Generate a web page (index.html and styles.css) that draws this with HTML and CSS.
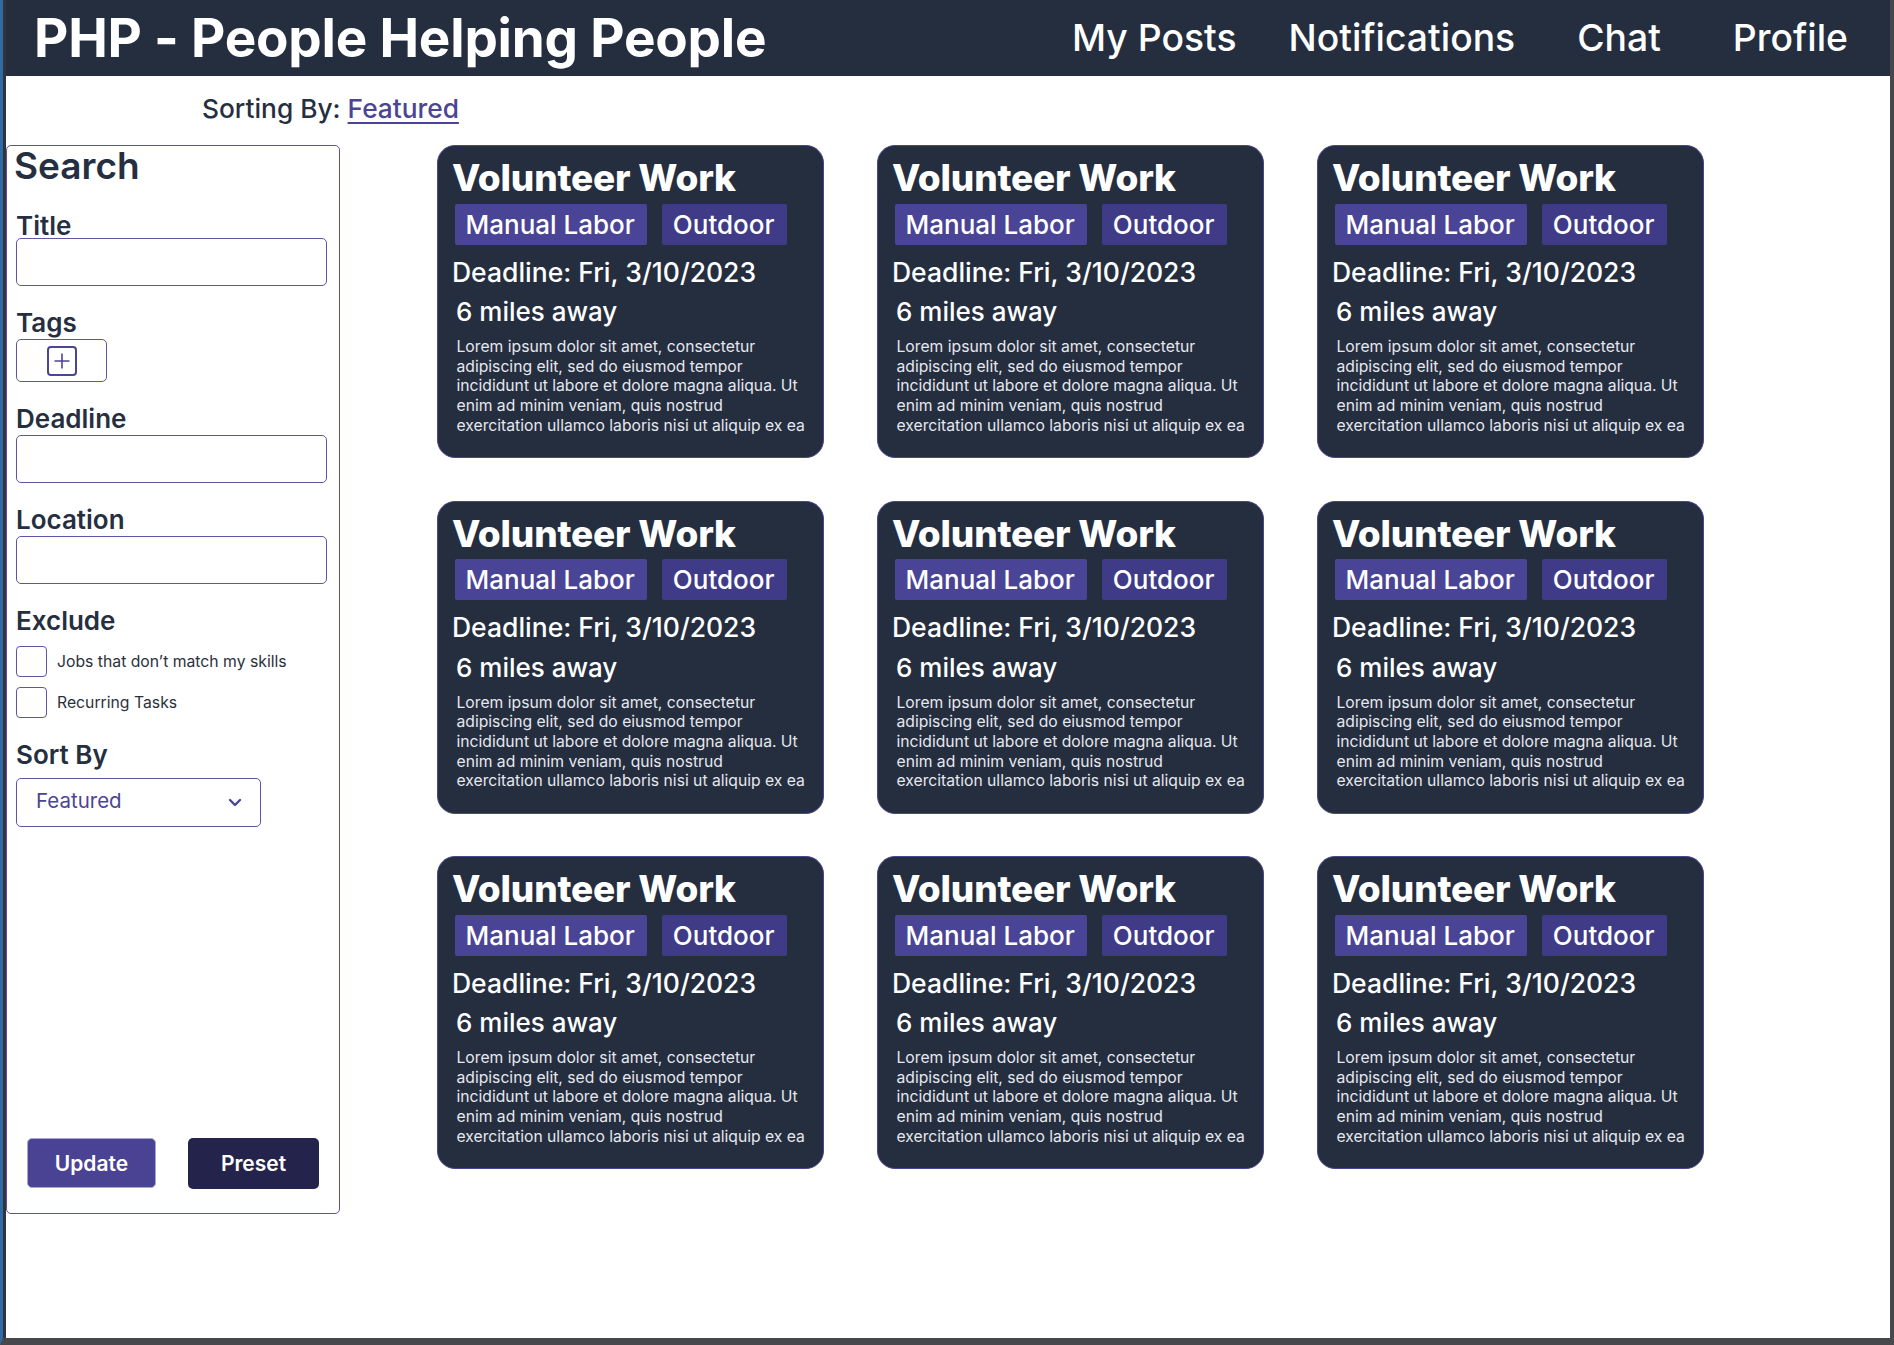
FILE: index.html
```html
<!DOCTYPE html>
<html lang="en">
<head>
<meta charset="utf-8">
<title>PHP - People Helping People</title>
<link rel="stylesheet" href="styles.css">
</head>
<body>
<div class="frame">
  <div class="page">
    <header class="topbar">
      <h1 class="brand">PHP - People Helping People</h1>
      <nav class="nav">
        <a class="nav-link">My Posts</a>
        <a class="nav-link">Notifications</a>
        <a class="nav-link nav-link--chat">Chat</a>
        <a class="nav-link nav-link--profile">Profile</a>
      </nav>
    </header>

    <div class="sortline">Sorting By: <a class="sortline-value">Featured</a></div>

    <div class="content">
      <aside class="search">
        <h2 class="search-title">Search</h2>

        <div class="field-label field-label--first">Title</div>
        <div class="text-input"></div>

        <div class="field-label">Tags</div>
        <div class="tag-picker">
          <span class="tag-add">
            <svg width="30" height="30" viewBox="0 0 30 30" aria-hidden="true">
              <rect x="1" y="1" width="28" height="28" rx="3" fill="none" stroke="#4b4593" stroke-width="2"/>
              <path d="M15 7.5v15M7.5 15h15" stroke="#4b4593" stroke-width="1.6" fill="none"/>
            </svg>
          </span>
        </div>

        <div class="field-label">Deadline</div>
        <div class="text-input"></div>

        <div class="field-label">Location</div>
        <div class="text-input"></div>

        <div class="field-label">Exclude</div>
        <div class="check-row check-row--first">
          <span class="checkbox"></span>
          <span class="check-text">Jobs that don’t match my skills</span>
        </div>
        <div class="check-row">
          <span class="checkbox"></span>
          <span class="check-text">Recurring Tasks</span>
        </div>

        <div class="field-label">Sort By</div>
        <div class="select">
          <span>Featured</span>
          <svg width="14" height="9" viewBox="0 0 14 9" aria-hidden="true">
            <path d="M2 2l5 5 5-5" fill="none" stroke="#4b4593" stroke-width="2.4" stroke-linecap="round" stroke-linejoin="round"/>
          </svg>
        </div>

        <div class="actions">
          <button class="btn btn--update">Update</button>
          <button class="btn btn--preset">Preset</button>
        </div>
      </aside>

      <main class="grid">
        <article class="card">
          <h3 class="card-title">Volunteer Work</h3>
          <div class="card-tags"><span class="tag">Manual Labor</span><span class="tag tag--alt">Outdoor</span></div>
          <div class="card-deadline">Deadline: Fri, 3/10/2023</div>
          <div class="card-distance">6 miles away</div>
          <p class="card-desc">Lorem ipsum dolor sit amet, consectetur<br>adipiscing elit, sed do eiusmod tempor<br>incididunt ut labore et dolore magna aliqua. Ut<br>enim ad minim veniam, quis nostrud<br>exercitation ullamco laboris nisi ut aliquip ex ea</p>
        </article>
        <article class="card">
          <h3 class="card-title">Volunteer Work</h3>
          <div class="card-tags"><span class="tag">Manual Labor</span><span class="tag tag--alt">Outdoor</span></div>
          <div class="card-deadline">Deadline: Fri, 3/10/2023</div>
          <div class="card-distance">6 miles away</div>
          <p class="card-desc">Lorem ipsum dolor sit amet, consectetur<br>adipiscing elit, sed do eiusmod tempor<br>incididunt ut labore et dolore magna aliqua. Ut<br>enim ad minim veniam, quis nostrud<br>exercitation ullamco laboris nisi ut aliquip ex ea</p>
        </article>
        <article class="card">
          <h3 class="card-title">Volunteer Work</h3>
          <div class="card-tags"><span class="tag">Manual Labor</span><span class="tag tag--alt">Outdoor</span></div>
          <div class="card-deadline">Deadline: Fri, 3/10/2023</div>
          <div class="card-distance">6 miles away</div>
          <p class="card-desc">Lorem ipsum dolor sit amet, consectetur<br>adipiscing elit, sed do eiusmod tempor<br>incididunt ut labore et dolore magna aliqua. Ut<br>enim ad minim veniam, quis nostrud<br>exercitation ullamco laboris nisi ut aliquip ex ea</p>
        </article>
        <article class="card">
          <h3 class="card-title">Volunteer Work</h3>
          <div class="card-tags"><span class="tag">Manual Labor</span><span class="tag tag--alt">Outdoor</span></div>
          <div class="card-deadline">Deadline: Fri, 3/10/2023</div>
          <div class="card-distance">6 miles away</div>
          <p class="card-desc">Lorem ipsum dolor sit amet, consectetur<br>adipiscing elit, sed do eiusmod tempor<br>incididunt ut labore et dolore magna aliqua. Ut<br>enim ad minim veniam, quis nostrud<br>exercitation ullamco laboris nisi ut aliquip ex ea</p>
        </article>
        <article class="card">
          <h3 class="card-title">Volunteer Work</h3>
          <div class="card-tags"><span class="tag">Manual Labor</span><span class="tag tag--alt">Outdoor</span></div>
          <div class="card-deadline">Deadline: Fri, 3/10/2023</div>
          <div class="card-distance">6 miles away</div>
          <p class="card-desc">Lorem ipsum dolor sit amet, consectetur<br>adipiscing elit, sed do eiusmod tempor<br>incididunt ut labore et dolore magna aliqua. Ut<br>enim ad minim veniam, quis nostrud<br>exercitation ullamco laboris nisi ut aliquip ex ea</p>
        </article>
        <article class="card">
          <h3 class="card-title">Volunteer Work</h3>
          <div class="card-tags"><span class="tag">Manual Labor</span><span class="tag tag--alt">Outdoor</span></div>
          <div class="card-deadline">Deadline: Fri, 3/10/2023</div>
          <div class="card-distance">6 miles away</div>
          <p class="card-desc">Lorem ipsum dolor sit amet, consectetur<br>adipiscing elit, sed do eiusmod tempor<br>incididunt ut labore et dolore magna aliqua. Ut<br>enim ad minim veniam, quis nostrud<br>exercitation ullamco laboris nisi ut aliquip ex ea</p>
        </article>
        <article class="card">
          <h3 class="card-title">Volunteer Work</h3>
          <div class="card-tags"><span class="tag">Manual Labor</span><span class="tag tag--alt">Outdoor</span></div>
          <div class="card-deadline">Deadline: Fri, 3/10/2023</div>
          <div class="card-distance">6 miles away</div>
          <p class="card-desc">Lorem ipsum dolor sit amet, consectetur<br>adipiscing elit, sed do eiusmod tempor<br>incididunt ut labore et dolore magna aliqua. Ut<br>enim ad minim veniam, quis nostrud<br>exercitation ullamco laboris nisi ut aliquip ex ea</p>
        </article>
        <article class="card">
          <h3 class="card-title">Volunteer Work</h3>
          <div class="card-tags"><span class="tag">Manual Labor</span><span class="tag tag--alt">Outdoor</span></div>
          <div class="card-deadline">Deadline: Fri, 3/10/2023</div>
          <div class="card-distance">6 miles away</div>
          <p class="card-desc">Lorem ipsum dolor sit amet, consectetur<br>adipiscing elit, sed do eiusmod tempor<br>incididunt ut labore et dolore magna aliqua. Ut<br>enim ad minim veniam, quis nostrud<br>exercitation ullamco laboris nisi ut aliquip ex ea</p>
        </article>
        <article class="card">
          <h3 class="card-title">Volunteer Work</h3>
          <div class="card-tags"><span class="tag">Manual Labor</span><span class="tag tag--alt">Outdoor</span></div>
          <div class="card-deadline">Deadline: Fri, 3/10/2023</div>
          <div class="card-distance">6 miles away</div>
          <p class="card-desc">Lorem ipsum dolor sit amet, consectetur<br>adipiscing elit, sed do eiusmod tempor<br>incididunt ut labore et dolore magna aliqua. Ut<br>enim ad minim veniam, quis nostrud<br>exercitation ullamco laboris nisi ut aliquip ex ea</p>
        </article>
      </main>
    </div>
  </div>
</div>
</body>
</html>
```

FILE: styles.css
```css
* { box-sizing: border-box; }

html, body {
  margin: 0;
  padding: 0;
  background: #ffffff;
}

body {
  font-family: Inter, "Noto Sans", "Liberation Sans", sans-serif;
  color: #262f3f;
}

.frame {
  width: 1894px;
  height: 1345px;
  border-left: 3px solid #2f6aa2;
  border-right: 4px solid #47484c;
  border-bottom: 7px solid #47484c;
  overflow: hidden;
}

.page {
  height: 100%;
  border-left: 3px solid #30353d;
  background: #ffffff;
}

/* Header */
.topbar {
  height: 76px;
  background: #242e3f;
  display: flex;
  align-items: center;
  justify-content: space-between;
  padding: 0 42px 0 28px;
}

.brand {
  margin: 0;
  font-size: 53px;
  font-weight: 700;
  line-height: 76px;
  color: #ffffff;
  letter-spacing: -0.2px;
  white-space: nowrap;
}

.nav {
  display: flex;
  align-items: center;
  gap: 52px;
}

.nav-link {
  font-size: 37.3px;
  font-weight: 500;
  line-height: 76px;
  color: #ffffff;
  white-space: nowrap;
}

.nav-link--chat { margin-left: 10px; }
.nav-link--profile { margin-left: 20px; }

/* Sorting line */
.sortline {
  margin-top: 17px;
  padding-left: 196px;
  font-size: 26.3px;
  font-weight: 500;
  line-height: 32px;
  color: #262f3f;
}

.sortline-value {
  color: #4b4593;
  text-decoration: underline;
  text-decoration-thickness: 2px;
  text-underline-offset: 4px;
}

/* Content */
.content {
  margin-top: 20px;
  display: flex;
  align-items: flex-start;
  gap: 97px;
}

/* Search sidebar */
.search {
  width: 334px;
  height: 1069px;
  border: 1px solid #5a53a3;
  border-radius: 5px;
  padding: 0 12px 24px 9px;
  display: flex;
  flex-direction: column;
  flex-shrink: 0;
}

.search-title {
  margin: 0 0 0 -2px;
  font-size: 37px;
  font-weight: 600;
  line-height: 39px;
  color: #262f3f;
}

.field-label {
  margin-top: 22px;
  font-size: 26px;
  font-weight: 600;
  line-height: 30px;
  color: #262f3f;
}

.field-label--first {
  margin-top: 29px;
  line-height: 23px;
}

.text-input {
  margin-top: 1px;
  height: 48px;
  width: 100%;
  border: 1.5px solid #5c56a5;
  border-radius: 5px;
}

.tag-picker {
  margin-top: 1px;
  width: 91px;
  height: 43px;
  border: 1.5px solid #5c56a5;
  border-radius: 5px;
  display: flex;
  align-items: center;
  justify-content: center;
}

.tag-add {
  display: flex;
  width: 30px;
  height: 30px;
}

.check-row {
  display: flex;
  align-items: center;
  gap: 10px;
  margin-top: 10px;
}

.checkbox {
  width: 31px;
  height: 31px;
  border: 1.5px solid #5c56a5;
  border-radius: 4px;
  flex-shrink: 0;
}

.check-text {
  font-size: 15.75px;
  font-weight: 400;
  color: #2b313c;
}

.select {
  margin-top: 8px;
  width: 245px;
  height: 49px;
  border: 1.5px solid #5c56a5;
  border-radius: 5px;
  padding: 0 18px 5px 19px;
  display: flex;
  align-items: center;
  justify-content: space-between;
  font-size: 20.5px;
  font-weight: 400;
  color: #4b4593;
}

.select svg { margin-top: 5px; }

.actions {
  margin-top: auto;
  display: flex;
  gap: 32px;
  padding-left: 11px;
}

.btn {
  font-family: Inter, "Noto Sans", "Liberation Sans", sans-serif;
  font-size: 21px;
  font-weight: 600;
  color: #ffffff;
  height: 51px;
  border-radius: 5px;
  padding: 0;
  cursor: pointer;
}

.btn--update {
  width: 129px;
  height: 50px;
  background: #4a4394;
  border: 1.5px solid #a4a6d4;
}

.btn--preset {
  width: 131px;
  background: #24234c;
  border: none;
}

/* Cards */
.grid {
  display: grid;
  grid-template-columns: repeat(3, 387px);
  grid-auto-rows: 313px;
  column-gap: 53px;
  row-gap: 42.5px;
}

.card {
  background: #242e3f;
  border: 1.5px solid #4b4690;
  border-radius: 18px;
  padding: 12px 0 0 14px;
  color: #ffffff;
  overflow: hidden;
}

.card-title {
  margin: 0;
  font-size: 37px;
  font-weight: 800;
  line-height: 39px;
  letter-spacing: -0.2px;
  white-space: nowrap;
}

.card-tags {
  margin: 6.5px 0 0 2.5px;
  display: flex;
  gap: 15px;
}

.tag {
  height: 41px;
  line-height: 41px;
  padding: 0 12px 0 11px;
  background: #4a4497;
  font-size: 26px;
  font-weight: 500;
  border-radius: 2px;
  white-space: nowrap;
}

.tag--alt { background: #403b87; }

.card-deadline {
  margin-top: 11px;
  font-size: 26.5px;
  font-weight: 500;
  line-height: 32px;
  white-space: nowrap;
}

.card-distance {
  margin-top: 9.5px;
  padding-left: 4px;
  font-size: 26px;
  font-weight: 500;
  line-height: 30px;
  white-space: nowrap;
}

.card-desc {
  margin: 10px 0 0;
  padding-left: 4.5px;
  font-size: 15.7px;
  font-weight: 400;
  line-height: 19.7px;
  color: #e6e8ee;
  white-space: nowrap;
}
```
